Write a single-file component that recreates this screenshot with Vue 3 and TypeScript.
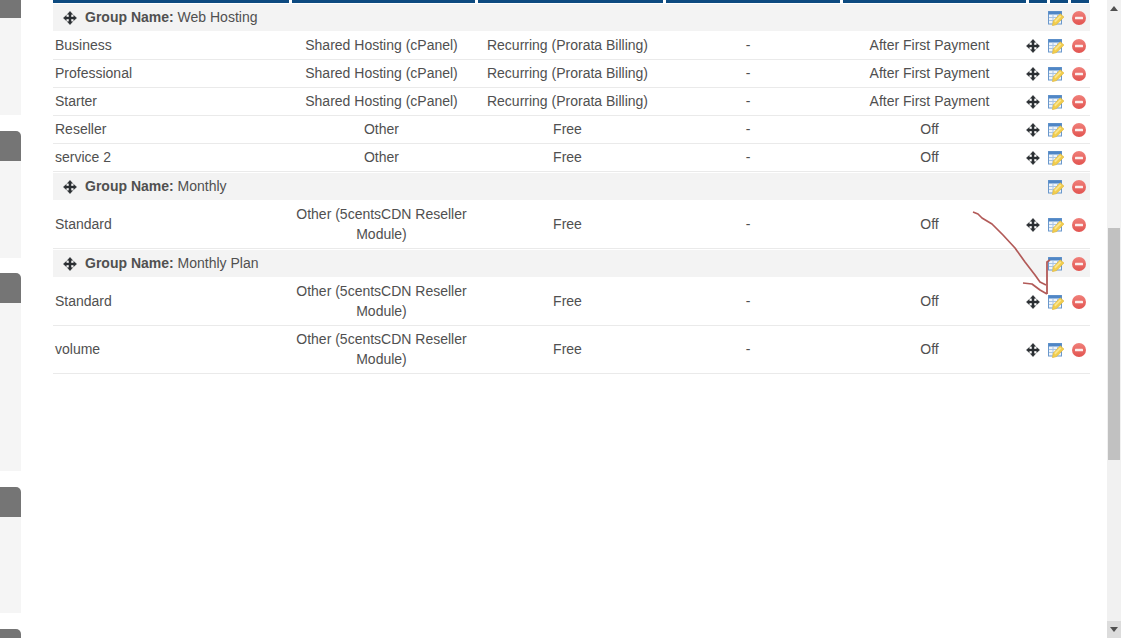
<script setup lang="ts">
interface Row { name: string; type: string; pay: string; price: string; auto: string; tall?: boolean }
interface Group { title: string; rows: Row[] }
const cdn = 'Other (5centsCDN Reseller Module)'
const groups: Group[] = [
  { title: 'Web Hosting', rows: [
    { name: 'Business', type: 'Shared Hosting (cPanel)', pay: 'Recurring (Prorata Billing)', price: '-', auto: 'After First Payment' },
    { name: 'Professional', type: 'Shared Hosting (cPanel)', pay: 'Recurring (Prorata Billing)', price: '-', auto: 'After First Payment' },
    { name: 'Starter', type: 'Shared Hosting (cPanel)', pay: 'Recurring (Prorata Billing)', price: '-', auto: 'After First Payment' },
    { name: 'Reseller', type: 'Other', pay: 'Free', price: '-', auto: 'Off' },
    { name: 'service 2', type: 'Other', pay: 'Free', price: '-', auto: 'Off' },
  ] },
  { title: 'Monthly', rows: [
    { name: 'Standard', type: cdn, pay: 'Free', price: '-', auto: 'Off', tall: true },
  ] },
  { title: 'Monthly Plan', rows: [
    { name: 'Standard', type: cdn, pay: 'Free', price: '-', auto: 'Off', tall: true },
    { name: 'volume', type: cdn, pay: 'Free', price: '-', auto: 'Off', tall: true },
  ] },
]
const panels = [
  { tab: 18, body: 97, radius: false },
  { tab: 30, body: 97, radius: true },
  { tab: 30, body: 168, radius: true },
  { tab: 30, body: 96, radius: true },
  { tab: 30, body: 0, radius: true },
]
</script>

<template>
  <div class="page">
    <aside class="side">
      <div v-for="(p, i) in panels" :key="i" class="panel" :class="{ tight: i === 1 }">
        <div class="tab" :class="{ round: p.radius }" :style="{ height: p.tab + 'px' }"></div>
        <div class="body" :style="{ height: p.body + 'px' }"></div>
      </div>
    </aside>

    <main class="main">
      <div class="heads">
        <i v-for="n in 8" :key="n" class="head"></i>
      </div>
      <template v-for="g in groups" :key="g.title">
        <div class="group">
          <svg class="move gmove" viewBox="0 0 14 14"><use href="#mv" /></svg>
          <span class="gtitle"><b>Group Name:</b> {{ g.title }}</span>
          <span class="gicons">
            <svg class="edit" viewBox="0 0 16 16"><use href="#ed" /></svg>
            <svg class="del" viewBox="0 0 14 14"><use href="#dl" /></svg>
          </span>
        </div>
        <div v-for="r in g.rows" :key="g.title + r.name" class="row" :class="{ tall: r.tall }">
          <div class="name">{{ r.name }}</div>
          <div class="c">{{ r.type }}</div>
          <div class="c">{{ r.pay }}</div>
          <div class="c">{{ r.price }}</div>
          <div class="c">{{ r.auto }}</div>
          <div class="icons">
            <svg class="move" viewBox="0 0 14 14"><use href="#mv" /></svg>
            <svg class="edit" viewBox="0 0 16 16"><use href="#ed" /></svg>
            <svg class="del" viewBox="0 0 14 14"><use href="#dl" /></svg>
          </div>
        </div>
      </template>
    </main>

    <div class="scroll">
      <div class="arrow"><span class="up"></span></div>
      <div class="track"><div class="thumb"></div></div>
      <div class="arrow dn"><span class="down"></span></div>
    </div>

    <svg class="defs" width="0" height="0">
      <defs>
        <linearGradient id="rd" x1="0" y1="0" x2="0" y2="1">
          <stop offset="0" stop-color="#f0807a" />
          <stop offset="1" stop-color="#e25450" />
        </linearGradient>
        <g id="mv">
          <path fill="#2b2f33" stroke="#2b2f33" stroke-width=".3" stroke-linejoin="round"
            d="M7 .3 9.8 3.4H8.1v2.5h2.5V4.2L13.7 7l-3.1 2.8V8.1H8.1v2.5h1.7L7 13.7l-2.8-3.1h1.7V8.1H3.4v1.7L.3 7l3.1-2.8v1.7h2.5V3.4H4.2Z" />
        </g>
        <g id="ed">
          <rect x="0.5" y="1.5" width="13" height="12.5" fill="#eef4fb" stroke="#6a98cc" />
          <rect x="0.5" y="1.5" width="13" height="3" fill="#4f86c6" />
          <path stroke="#a9c4e4" stroke-width="1" d="M1 7.5h12M1 10.5h12M5 4.5v9M9.5 4.5v9" fill="none" />
          <path fill="#f2cd4c" stroke="#dcb035" stroke-width=".5" d="M12.2 3.8 16 7 8.6 14.6 4.4 15.8 5.2 11Z" />
          <path fill="#f9e48e" d="M12 5.2 13.4 6.4 7.4 12.4 6.2 11Z" />
        </g>
        <g id="dl">
          <circle cx="7" cy="7" r="7" fill="url(#rd)" />
          <rect x="3" y="5.7" width="8" height="2.6" rx=".6" fill="#fbeeed" />
        </g>
      </defs>
    </svg>

    <svg class="mark" width="1121" height="638" viewBox="0 0 1121 638">
      <path fill="none" stroke="#b25a58" stroke-width="1.7" stroke-linejoin="round"
        d="M973 212 978 214 982 218 992 224 1003 235 1015 248 1025 262 1035 275 1040 282 1046 285" />
      <path fill="none" stroke="#b25a58" stroke-width="1.8" stroke-linejoin="round" d="M1050 260 1047 262 1047 294" />
      <path fill="none" stroke="#b25a58" stroke-width="1.7" stroke-linejoin="round" d="M1023 283 1032 284 1040 290 1047 294" />
    </svg>
  </div>
</template>

<style>
html, body { margin: 0; background: #fff; overflow: hidden; }
</style>

<style scoped>
.page {
  position: relative;
  display: flex;
  width: 1121px;
  height: 638px;
  overflow: hidden;
  background: #fff;
  font-family: "Liberation Sans", Arial, sans-serif;
  font-size: 14px;
  color: #505050;
}
.side { flex: 0 0 21px; width: 21px; }
.panel { margin-bottom: 16px; }
.panel.tight { margin-bottom: 15px; }
.tab { background: #757575; }
.tab.round { border-radius: 0 5px 0 0; }
.body { background: #f5f5f5; }
.main { flex: 0 0 1037px; width: 1037px; margin-left: 32px; align-self: flex-start; }
.heads { display: grid; grid-template-columns: 236px 183px 185px 174px 183px 18px 18px 18px; column-gap: 3px; height: 3px; margin-bottom: 1px; }
.head { background: #0d4a80; display: block; }
.group {
  display: flex;
  align-items: center;
  height: 27px;
  background: #f3f3f3;
  margin-bottom: 1px;
}
.gmove { margin-left: 10px; margin-right: 8px; }
.gtitle { flex: 1; padding-bottom: 2px; }
.gicons { display: flex; align-items: center; gap: 8px; padding-right: 4px; }
.row {
  display: grid;
  grid-template-columns: 237px 183px 189px 172px 191px 65px;
  align-items: center;
  height: 27px;
  border-bottom: 1px solid #eaeaea;
}
.row.tall { height: 47px; }
.row + .group { margin-top: 1px; }
.name { padding: 0 0 2px 2px; }
.c { text-align: center; line-height: 20px; padding-bottom: 2px; }
.icons { display: flex; align-items: center; justify-content: flex-end; gap: 8px; padding-right: 4px; }
.move { width: 14px; height: 14px; flex: none; }
.edit { width: 16px; height: 16px; flex: none; }
.del { width: 14px; height: 14px; flex: none; }
.scroll {
  position: absolute;
  top: 0;
  right: 0;
  bottom: 0;
  width: 14px;
  display: flex;
  flex-direction: column;
  background: #f1f1f1;
}
.arrow { height: 17px; display: flex; align-items: center; justify-content: center; flex: none; }
.arrow.dn { background: #dcdcdc; }
.up, .down { width: 0; height: 0; border-left: 4px solid transparent; border-right: 4px solid transparent; }
.up { border-bottom: 5px solid #505050; }
.down { border-top: 5px solid #505050; }
.track { flex: 1; padding-top: 211px; }
.thumb { height: 232px; margin: 0 1px; background: #c1c1c1; }
.defs { position: absolute; }
.mark { position: absolute; left: 0; top: 0; pointer-events: none; }
</style>
